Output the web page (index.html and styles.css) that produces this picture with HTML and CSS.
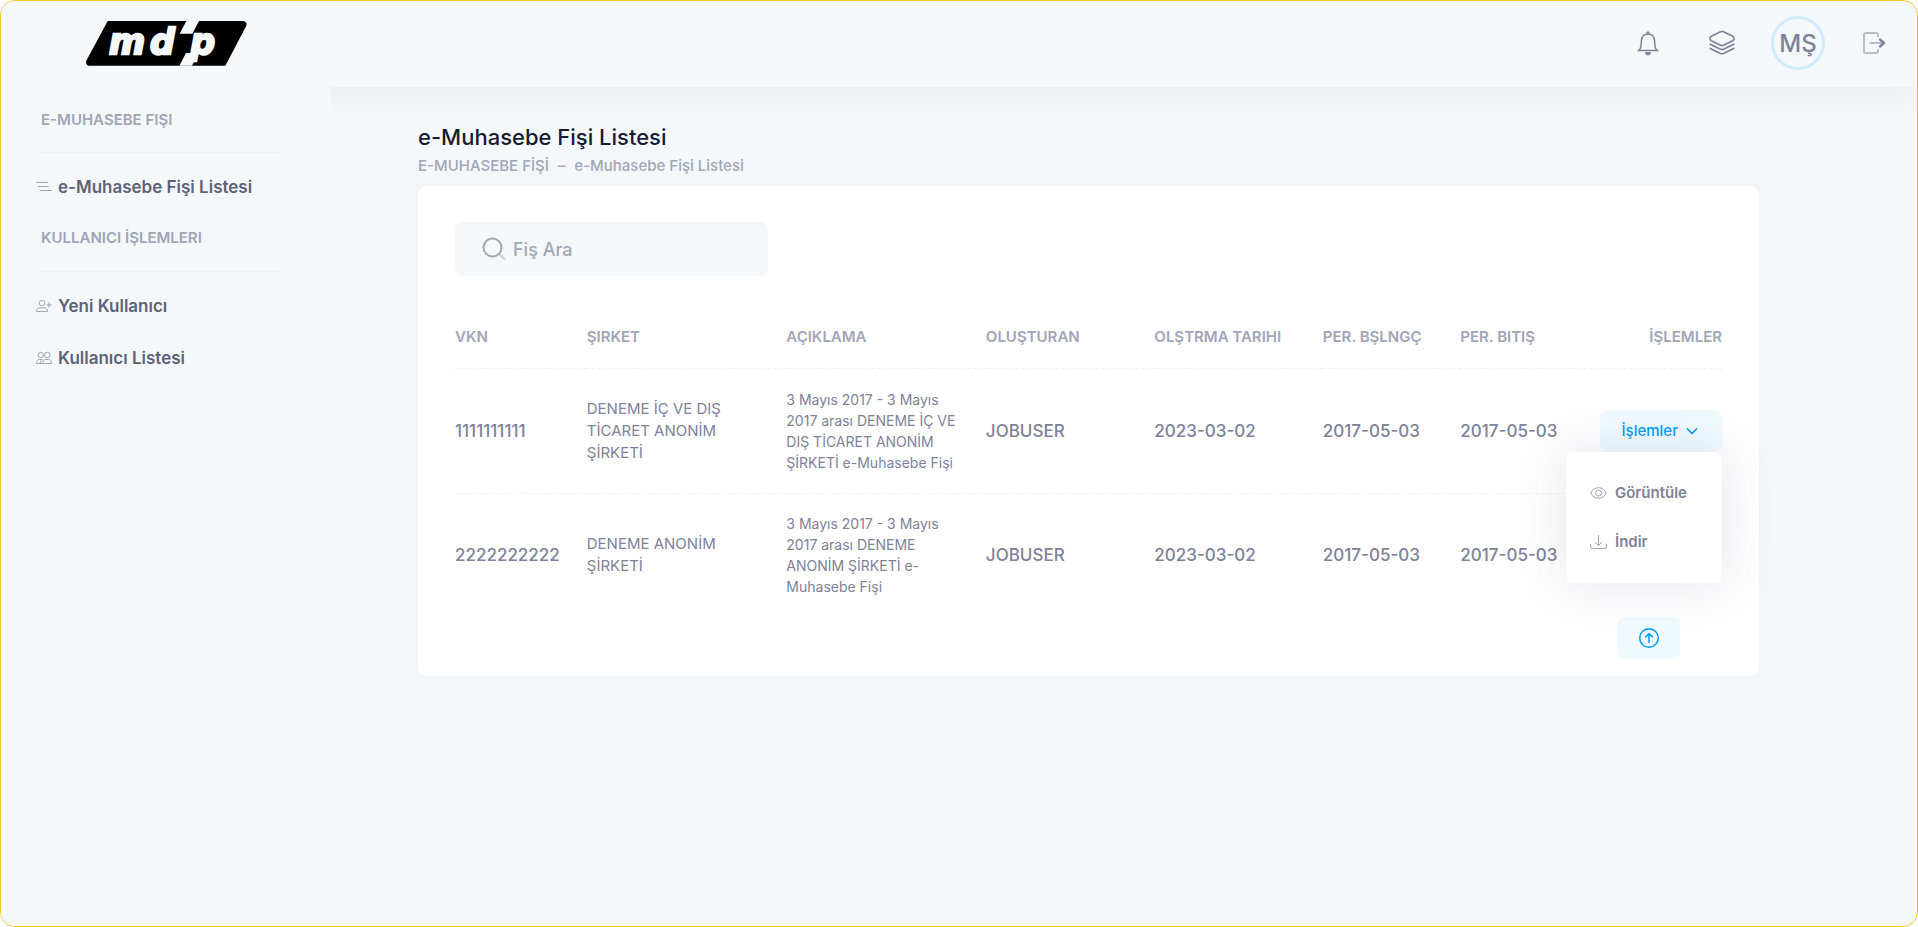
FILE: index.html
```html
<!DOCTYPE html>
<html lang="tr">
<head>
<meta charset="utf-8">
<title>e-Muhasebe Fişi Listesi</title>
<link rel="stylesheet" href="styles.css">
</head>
<body>
<div class="app">
  <header class="topbar">
    <button class="icon-btn" aria-label="Bildirimler">
      <svg width="24" height="26" viewBox="0 0 24 26" fill="none" stroke="currentColor" stroke-width="1.5"><path d="M1.500 20.500h21M3.500 20c1.500-2 1.700-5 1.900-9C5.700 6.500 8 4 12 4s6.300 2.500 6.600 7c.2 4 .4 7 1.900 9" /><path d="M9.500 22.500h5a2.500 2.500 0 0 1-5 0zM11 2h2v1.500h-2z" fill="currentColor" stroke-width="1"/></svg>
    </button>
    <button class="icon-btn" aria-label="Uygulamalar">
      <svg width="26" height="26" viewBox="0 0 26 26" fill="none" stroke="currentColor" stroke-width="1.700" stroke-linejoin="round" stroke-linecap="round"><path d="M11.500 1.800 2.300 6.200q-1.300.8-1.300 2v.8q0 1 1.300 1.800l9.200 4.400q1.500.7 3 0l9.200-4.400q1.300-.8 1.300-1.800v-.8q0-1.200-1.300-2l-9.200-4.400q-1.500-.7-3 0z"/><path d="M1.200 14.200l10.300 5q1.500.7 3 0l10.300-5M1.200 18.400l10.300 5q1.500.7 3 0l10.300-5"/></svg>
    </button>
    <button class="avatar">MŞ</button>
    <button class="icon-btn" aria-label="Çıkış">
      <svg width="24" height="24" viewBox="0 0 24 24" fill="none" stroke="currentColor"><path d="M16 6V4q0-2-2-2H4Q2 2 2 4v16q0 2 2 2h10q2 0 2-2v-2M7.500 12h12" stroke-width="2" opacity=".5"/><path d="M18 8.500 22 12l-4 3.500" stroke-width="2.400" stroke-linecap="round" stroke-linejoin="round"/></svg>
    </button>
  </header>

  <aside class="sidebar">
    <a class="logo" href="#" aria-label="mdp">
      <svg width="161" height="45" viewBox="17 17 483 135">
        <path d="M82 17H490q11 4 8 14L435 151H24q-9-4-6-15z"/>
        <path class="logo-light" d="M318 17h38l-20 38h-38zM317 113h38l-20 38h-38z"/>
        <text class="logo-light logo-text" x="86" y="115">m</text>
        <text class="logo-light logo-text" x="209" y="115">d</text>
        <text class="logo-light logo-text" x="330" y="115">p</text>
      </svg>
    </a>
    <nav class="menu">
      <h2 class="menu-heading">E-MUHASEBE FIŞI</h2>
      <a class="menu-link" href="#">
        <svg width="16" height="16" viewBox="0 0 16 16" fill="none" stroke="currentColor"><path d="M0 3.500h12M2 7.500h11M4 11.500h12"/></svg>
        e-Muhasebe Fişi Listesi</a>
      <h2 class="menu-heading">KULLANICI İŞLEMLERI</h2>
      <a class="menu-link" href="#">
        <svg width="16" height="16" viewBox="0 0 16 16" fill="none" stroke="currentColor"><circle cx="6" cy="5" r="2.800"/><path d="M.5 13.500c0-2.300 1.300-3.700 3.500-3.700h4c2.200 0 3.500 1.400 3.500 3.700zM13 4.500v5M10.500 7h5.500"/></svg>
        Yeni Kullanıcı</a>
      <a class="menu-link" href="#">
        <svg width="16" height="16" viewBox="0 0 16 16" fill="none" stroke="currentColor"><circle cx="4.800" cy="5" r="2.600"/><circle cx="11.300" cy="5" r="2.800"/><path d="M6 13.500H.5c0-2.500.7-4 3-4h3M6.500 13.500c0-2.500 1.300-4 3.300-4h2.700c2 0 3 1.500 3 4zM4 13.500c0-2 1-3 2.500-4"/></svg>
        Kullanıcı Listesi</a>
    </nav>
  </aside>

  <main class="content">
    <h1 class="title">e-Muhasebe Fişi Listesi</h1>
    <div class="crumbs"><span>E-MUHASEBE FİŞİ</span><span>–</span><span>e-Muhasebe Fişi Listesi</span></div>
    <section class="card">
      <label class="search">
        <svg width="24" height="24" viewBox="0 0 24 24" fill="none" stroke="currentColor"><circle cx="10.500" cy="10.500" r="9" stroke-width="2"/><path d="M17 17l6 5.500" stroke-width="2" opacity=".5"/></svg>
        <input type="text" placeholder="Fiş Ara" aria-label="Fiş Ara">
      </label>
      <table class="grid">
        <colgroup><col class="c-vkn"><col class="c-text"><col class="c-text"><col class="c-user"><col class="c-user"><col class="c-date"><col class="c-end"><col></colgroup>
        <thead>
          <tr><th>VKN</th><th>ŞIRKET</th><th>AÇIKLAMA</th><th>OLUŞTURAN</th><th>OLŞTRMA TARIHI</th><th>PER. BŞLNGÇ</th><th>PER. BITIŞ</th><th class="last">İŞLEMLER</th></tr>
        </thead>
        <tbody>
          <tr>
            <td>1111111111</td><td class="company">DENEME İÇ VE DIŞ TİCARET ANONİM ŞİRKETİ</td>
            <td class="desc">3 Mayıs 2017 - 3 Mayıs 2017 arası DENEME İÇ VE DIŞ TİCARET ANONİM ŞİRKETİ e-Muhasebe Fişi</td>
            <td>JOBUSER</td><td>2023-03-02</td><td>2017-05-03</td><td>2017-05-03</td>
            <td class="last">
              <div class="dropdown">
                <button class="btn">İşlemler
                  <svg width="12" height="12" viewBox="0 0 12 12" fill="none" stroke="currentColor" stroke-width="1.700" stroke-linecap="round" stroke-linejoin="round"><path d="M1.500 4 6 8.500 10.500 4"/></svg>
                </button>
                <div class="dropdown-menu">
                  <a href="#"><svg width="17" height="16" viewBox="0 0 17 16" fill="none" stroke="currentColor"><path d="M.7 8C2.500 4.500 5 2.700 8.500 2.700S14.500 4.500 16.300 8c-1.800 3.500-4.300 5.300-7.800 5.300S2.500 11.500.7 8z"/><circle cx="8.500" cy="8" r="3"/></svg>Görüntüle</a>
                  <a href="#"><svg width="17" height="16" viewBox="0 0 17 16" fill="none" stroke="currentColor"><path d="M8.500 1v10.500M5 8l3.500 3.500L12 8M.6 10v3q0 1.500 1.500 1.500h12.800q1.500 0 1.500-1.500v-3"/></svg>İndir</a>
                </div>
              </div>
            </td>
          </tr>
          <tr>
            <td>2222222222</td><td class="company">DENEME ANONİM ŞİRKETİ</td>
            <td class="desc">3 Mayıs 2017 - 3 Mayıs 2017 arası DENEME ANONİM ŞİRKETİ e-Muhasebe Fişi</td>
            <td>JOBUSER</td><td>2023-03-02</td><td>2017-05-03</td><td>2017-05-03</td><td></td>
          </tr>
        </tbody>
      </table>
      <div class="card-foot">
        <button class="btn btn-up" aria-label="Yukarı">
          <svg width="22" height="22" viewBox="0 0 22 22" fill="none" stroke="currentColor" stroke-width="1.500" stroke-linecap="round" stroke-linejoin="round"><circle cx="11" cy="11" r="9.300"/><path d="M11 15.500V7M7.500 10 11 6.500l3.500 3.500"/></svg>
        </button>
      </div>
    </section>
  </main>
</div>
</body>
</html>
```

FILE: styles.css
```css
* { box-sizing: border-box; }
html { background: #fff; }
body { margin: 0; font-family: Inter, "Noto Sans", sans-serif; font-size: 16px; color: #7e8299; }
button, input { font: inherit; color: inherit; border: 0; background: none; padding: 0; }
a { color: inherit; text-decoration: none; }
svg { display: block; flex: none; }

.app {
  display: grid;
  grid-template-columns: 330px 1fr;
  grid-template-rows: 86px 1fr;
  min-height: 100vh;
  border: 1px solid #f1c62e;
  border-radius: 15px;
  background: #f5f8fa;
  overflow: hidden;
}

.topbar {
  grid-area: 1 / 1 / 2 / 3;
  display: flex;
  align-items: center;
  justify-content: flex-end;
  gap: 36px;
  padding: 0 30px 2px 0;
  box-shadow: 0 10px 30px 0 rgba(82, 63, 105, 0.06);
}
.icon-btn { display: grid; place-items: center; width: 26px; height: 40px; }
.icon-btn:first-child { margin-right: 12px; }
.avatar {
  width: 54px;
  height: 54px;
  border: 3px solid #d0ebfa;
  border-radius: 50%;
  font-size: 24px;
  font-weight: 500;
}

.sidebar {
  grid-area: 1 / 1 / 3 / 2;
  z-index: 1;
  background: #f5f8fa;
}
.logo { display: block; padding: 20px 0 0 85px; }
.logo svg { overflow: visible; }
.logo-light { fill: #f5f8fa; }
.logo-text { font: italic bold 104px "DejaVu Sans", sans-serif; stroke: #f5f8fa; stroke-width: 7px; }
.menu { padding: 43px 50px 0 35px; }
.menu-heading {
  margin: 0 0 8px 5px;
  height: 44px;
  border-bottom: 1px solid #eff2f5;
  font-size: 15px;
  line-height: 22px;
  font-weight: 600;
  color: #a1a5b7;
}
.menu-link {
  display: flex;
  align-items: center;
  gap: 6px;
  height: 52px;
  font-size: 17px;
  font-weight: 600;
  color: #5e6278;
}
.menu-link svg { color: #a1a5b7; }
.menu-link + .menu-heading { height: 45px; margin-top: 14px; }

.content { grid-area: 2 / 2 / 3 / 3; z-index: 1; padding: 35px 158px 40px 87px; }
.title { margin: 0; font-size: 22px; line-height: 30px; font-weight: 500; color: #181c32; }
.crumbs {
  display: flex;
  gap: 9px;
  margin-bottom: 7px;
  font-size: 15px;
  line-height: 27px;
  font-weight: 500;
  color: #a1a5b7;
}
.card {
  padding: 36px 37px 17px;
  border-radius: 9px;
  background: #fff;
  box-shadow: 0 0 24px 0 rgba(76, 87, 125, 0.03);
}
.search {
  display: flex;
  align-items: center;
  gap: 7px;
  width: 313px;
  height: 54px;
  padding: 0 27px;
  border-radius: 8px;
  background: #f5f8fa;
  color: #a1a5b7;
}
.search input { width: 100%; min-width: 0; font-size: 18px; font-weight: 500; outline: 0; }
.search input::placeholder { color: #a1a5b7; opacity: 1; }

.grid { width: 100%; margin-top: 28px; border-collapse: collapse; table-layout: fixed; }
.c-vkn { width: 10.4%; }
.c-text { width: 15.75%; }
.c-user { width: 13.3%; }
.c-date { width: 10.85%; }
.c-end { width: 9%; }
.grid th {
  height: 64px;
  padding: 2px 0 0;
  font-size: 15px;
  font-weight: 600;
  text-align: left;
  color: #a1a5b7;
  white-space: nowrap;
}
.grid td {
  padding: 20px 0;
  font-size: 17px;
  font-weight: 500;
  line-height: 24px;
}
.grid tr + tr td { padding: 19px 0 20px; }
.grid tr + tr td, .grid tbody tr:first-child td { border-top: 1px dashed #eff2f5; }
.grid td.company { padding-right: 24px; font-size: 15px; font-weight: 400; line-height: 22px; }
.grid td.desc { padding-right: 24px; font-size: 14px; font-weight: 400; line-height: 21px; }
.grid .last { text-align: right; }

.dropdown { position: relative; display: inline-block; }
.btn {
  display: flex;
  align-items: center;
  justify-content: center;
  gap: 8px;
  height: 42px;
  padding: 0 24px 0 22px;
  border-radius: 8px;
  background: #f1faff;
  font-size: 15px;
  font-weight: 500;
  color: #009ef7;
}
.dropdown-menu {
  position: absolute;
  top: 100%;
  right: 0;
  width: 156px;
  padding: 17px 0 16px;
  border-radius: 8px;
  background: #fff;
  box-shadow: 0 0 50px 0 rgba(82, 63, 105, 0.15);
}
.dropdown-menu a {
  display: flex;
  align-items: center;
  gap: 8px;
  height: 49px;
  padding: 0 24px;
  font-size: 15px;
  font-weight: 600;
}
.dropdown-menu svg { color: #a1a5b7; }
.card-foot { display: flex; justify-content: flex-end; padding-right: 42px; }
.btn-up { width: 63px; padding: 0; }
```
